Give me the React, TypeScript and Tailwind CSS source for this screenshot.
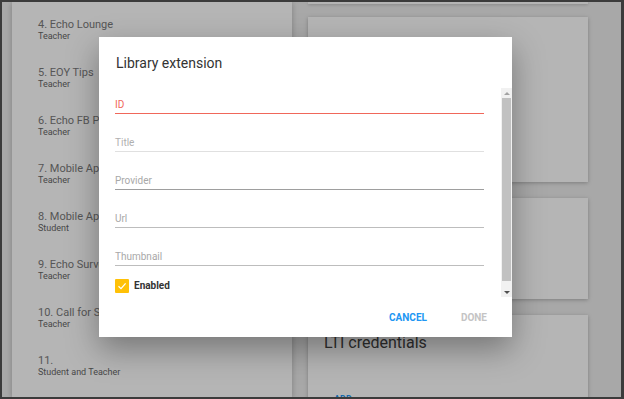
import React from 'react';

const items = [
  { title: '4. Echo Lounge', role: 'Teacher' },
  { title: '5. EOY Tips', role: 'Teacher' },
  { title: '6. Echo FB Page', role: 'Teacher' },
  { title: '7. Mobile App', role: 'Teacher' },
  { title: '8. Mobile App', role: 'Student' },
  { title: '9. Echo Survey', role: 'Teacher' },
  { title: '10. Call for Sessions', role: 'Teacher' },
  { title: '11.', role: 'Student and Teacher' },
];

const fields = [
  { label: 'ID', labelColor: 'text-[#f0675a]', lineColor: 'bg-[#f0675a]' },
  { label: 'Title', labelColor: 'text-[#b0b0b0]', lineColor: 'bg-[#e0e0e0]' },
  { label: 'Provider', labelColor: 'text-[#a8a8a8]', lineColor: 'bg-[#9e9e9e]' },
  { label: 'Url', labelColor: 'text-[#a8a8a8]', lineColor: 'bg-[#bdbdbd]' },
  { label: 'Thumbnail', labelColor: 'text-[#a8a8a8]', lineColor: 'bg-[#bdbdbd]' },
];

const App: React.FC = () => {
  return (
    <div className="w-[624px] h-[399px] border-t-2 border-l-2 border-r-[3px] border-b-2 border-[#3b3b3b] relative overflow-hidden bg-[#ededed] font-['Roboto',sans-serif]">
      <div className="flex h-full pl-[10px] gap-4">
        {/* left list card */}
        <div className="w-[280px] h-full shrink-0 bg-white shadow-[0_1px_6px_rgba(0,0,0,0.25)] pl-[26px] pt-[17px]">
          {items.map((it, idx) => (
            <div key={idx} className="h-12 flex flex-col items-start">
              <span className="whitespace-nowrap text-[11px] leading-[12px] text-[#7a7a7a]">{it.title}</span>
              <span className="text-[9px] leading-[11px] text-[#666]">{it.role}</span>
            </div>
          ))}
        </div>

        {/* right column cards */}
        <div className="w-[280px] shrink-0 flex flex-col">
          <div className="h-[2px] shrink-0 bg-white shadow-[0_1px_3px_rgba(0,0,0,0.2)]"></div>
          <div className="mt-[13px] h-[165px] shrink-0 bg-white shadow-[0_1px_4px_rgba(0,0,0,0.25)]"></div>
          <div className="mt-4 h-[101px] shrink-0 bg-white shadow-[0_1px_4px_rgba(0,0,0,0.25)]"></div>
          <div className="mt-4 h-[120px] shrink-0 bg-white shadow-[0_1px_4px_rgba(0,0,0,0.25)] pl-4 pt-[18px]">
            <div className="text-[16px] leading-[20px] text-[#444]">LTI credentials</div>
            <div className="mt-[40px] ml-[10px] text-[9px] font-bold text-[#2196f3]">ADD</div>
          </div>
        </div>
      </div>

      {/* dim overlay */}
      <div className="absolute inset-0 bg-[rgba(0,0,0,0.29)]"></div>

      {/* dialog */}
      <div className="absolute left-[97px] top-[35px] w-[413px] h-[300px] bg-white shadow-[0_12px_30px_rgba(0,0,0,0.35)] flex flex-col">
        <div className="px-[17px] pt-[16px] h-[51px] shrink-0 text-[14px] leading-[20px] text-[#333]">
          Library extension
        </div>

        <div className="relative h-[209px] shrink-0">
          <div className="pl-4 pr-[28px]">
            {fields.map((f) => (
              <div key={f.label} className="h-[38px] pt-[11px] flex flex-col">
                <span className={`self-start text-[10px] leading-[12px] ${f.labelColor}`}>{f.label}</span>
                <div className={`mt-[2px] h-px ${f.lineColor}`}></div>
              </div>
            ))}
            <div className="flex items-center">
              <div className="w-[14px] h-[14px] rounded-[1px] bg-[#ffc107] flex items-center justify-center">
                <svg width="10" height="10" viewBox="0 0 10 10">
                  <path d="M1.5 5.2 L4 7.6 L8.6 2.4" fill="none" stroke="white" strokeWidth="1.3" />
                </svg>
              </div>
              <span className="ml-[5px] text-[10px] font-bold text-[#333]">Enabled</span>
            </div>
          </div>

          {/* scrollbar */}
          <div className="absolute right-0 top-0 bottom-0 w-[11px] bg-[#f1f1f1] flex flex-col">
            <div className="h-[10px] flex items-center justify-center">
              <div className="w-0 h-0 border-l-[3px] border-r-[3px] border-b-[3px] border-l-transparent border-r-transparent border-b-[#a3a3a3]"></div>
            </div>
            <div className="h-[183px] mx-px bg-[#c1c1c1]"></div>
            <div className="flex-1"></div>
            <div className="h-[10px] flex items-center justify-center">
              <div className="w-0 h-0 border-l-[3px] border-r-[3px] border-t-[3px] border-l-transparent border-r-transparent border-t-[#505050]"></div>
            </div>
          </div>
        </div>

        <div className="flex-1 flex justify-end items-center pr-2">
          <button className="px-[17px] h-9 text-[10px] font-bold text-[#2196f3]">CANCEL</button>
          <button className="px-[17px] h-9 text-[10px] font-bold text-[#c4c4c4]">DONE</button>
        </div>
      </div>
    </div>
  );
};

export default App;
